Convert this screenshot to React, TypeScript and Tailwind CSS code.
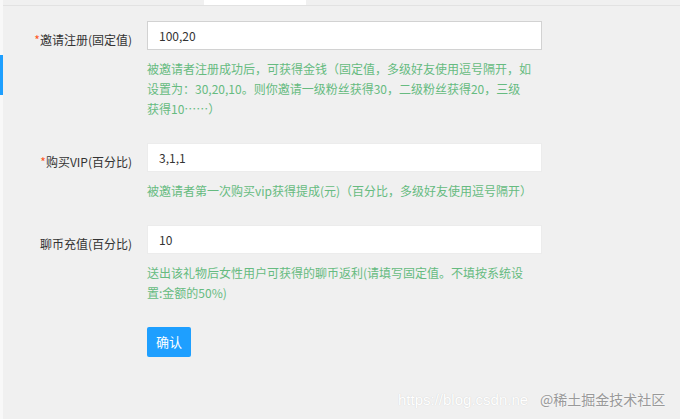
import React from 'react';

interface Row {
  label: string;
  required: boolean;
  value: string;
  help: string[];
  focused?: boolean;
}

const rows: Row[] = [
  {
    label: '邀请注册(固定值)',
    required: true,
    value: '100,20',
    focused: true,
    help: [
      '被邀请者注册成功后，可获得金钱（固定值，多级好友使用逗号隔开，如',
      '设置为：30,20,10。则你邀请一级粉丝获得30，二级粉丝获得20，三级',
      '获得10……）',
    ],
  },
  {
    label: '购买VIP(百分比)',
    required: true,
    value: '3,1,1',
    help: ['被邀请者第一次购买vip获得提成(元)（百分比，多级好友使用逗号隔开）'],
  },
  {
    label: '聊币充值(百分比)',
    required: false,
    value: '10',
    help: [
      '送出该礼物后女性用户可获得的聊币返利(请填写固定值。不填按系统设',
      '置:金额的50%)',
    ],
  },
];

const font = "font-['Microsoft_YaHei','Noto_Sans_CJK_SC',sans-serif]";

const FormRow: React.FC<{ row: Row }> = ({ row }) => (
  <div className="flex items-start">
    <label className="w-[144px] shrink-0 pr-[15px] pt-[9px] text-right text-[12px] leading-5 text-[#333]">
      {row.required && <span className="text-[#ff5722]">*</span>}
      {row.label}
    </label>
    <div className="flex flex-col">
      <input
        defaultValue={row.value}
        className={`h-[29px] w-[395px] bg-white pl-[11px] text-[12px] text-[#333] outline-none border ${
          row.focused ? 'border-[#d2d2d2]' : 'border-[#ececec]'
        }`}
      />
      <div className="mt-[9px] text-[12px] leading-5 text-[#66bb80]">
        {row.help.map((line, i) => (
          <div key={i} className="whitespace-nowrap">
            {line}
          </div>
        ))}
      </div>
    </div>
  </div>
);

export default function App() {
  return (
    <div className={`relative flex h-[419px] w-[680px] overflow-hidden bg-[#f0f0f0] ${font}`}>
      {/* sidebar edge */}
      <div className="flex w-[3px] shrink-0 flex-col bg-[#f8f8f8]">
        <div className="h-[55px]" />
        <div className="h-[40px] bg-[#1e9fff]" />
      </div>

      <div className="flex flex-1 flex-col">
        {/* tab strip */}
        <div className="flex h-[6px] border-b border-[#e2e2e2]">
          <div className="ml-[201px] w-[102px] bg-white" />
        </div>

        <div className="flex flex-col gap-[24px] pt-[15px]">
          {rows.map((row, i) => (
            <FormRow key={i} row={row} />
          ))}
          <div className="pl-[144px]">
            <button
              type="button"
              className="h-[30px] w-[44px] rounded-[2px] bg-[#1e9fff] text-[13px] text-white"
            >
              确认
            </button>
          </div>
        </div>
      </div>

      {/* watermarks */}
      <div className="absolute left-[398px] top-[389px] font-['Liberation_Sans',sans-serif] text-[15px] text-white [text-shadow:0_0_1px_#c8c8c8] whitespace-nowrap">
        https://blog.csdn.ne
      </div>
      <div className="absolute left-[540px] top-[389px] text-[14px] text-[#999] [text-shadow:0_0_2px_#fff] whitespace-nowrap">
        @稀土掘金技术社区
      </div>
    </div>
  );
}
